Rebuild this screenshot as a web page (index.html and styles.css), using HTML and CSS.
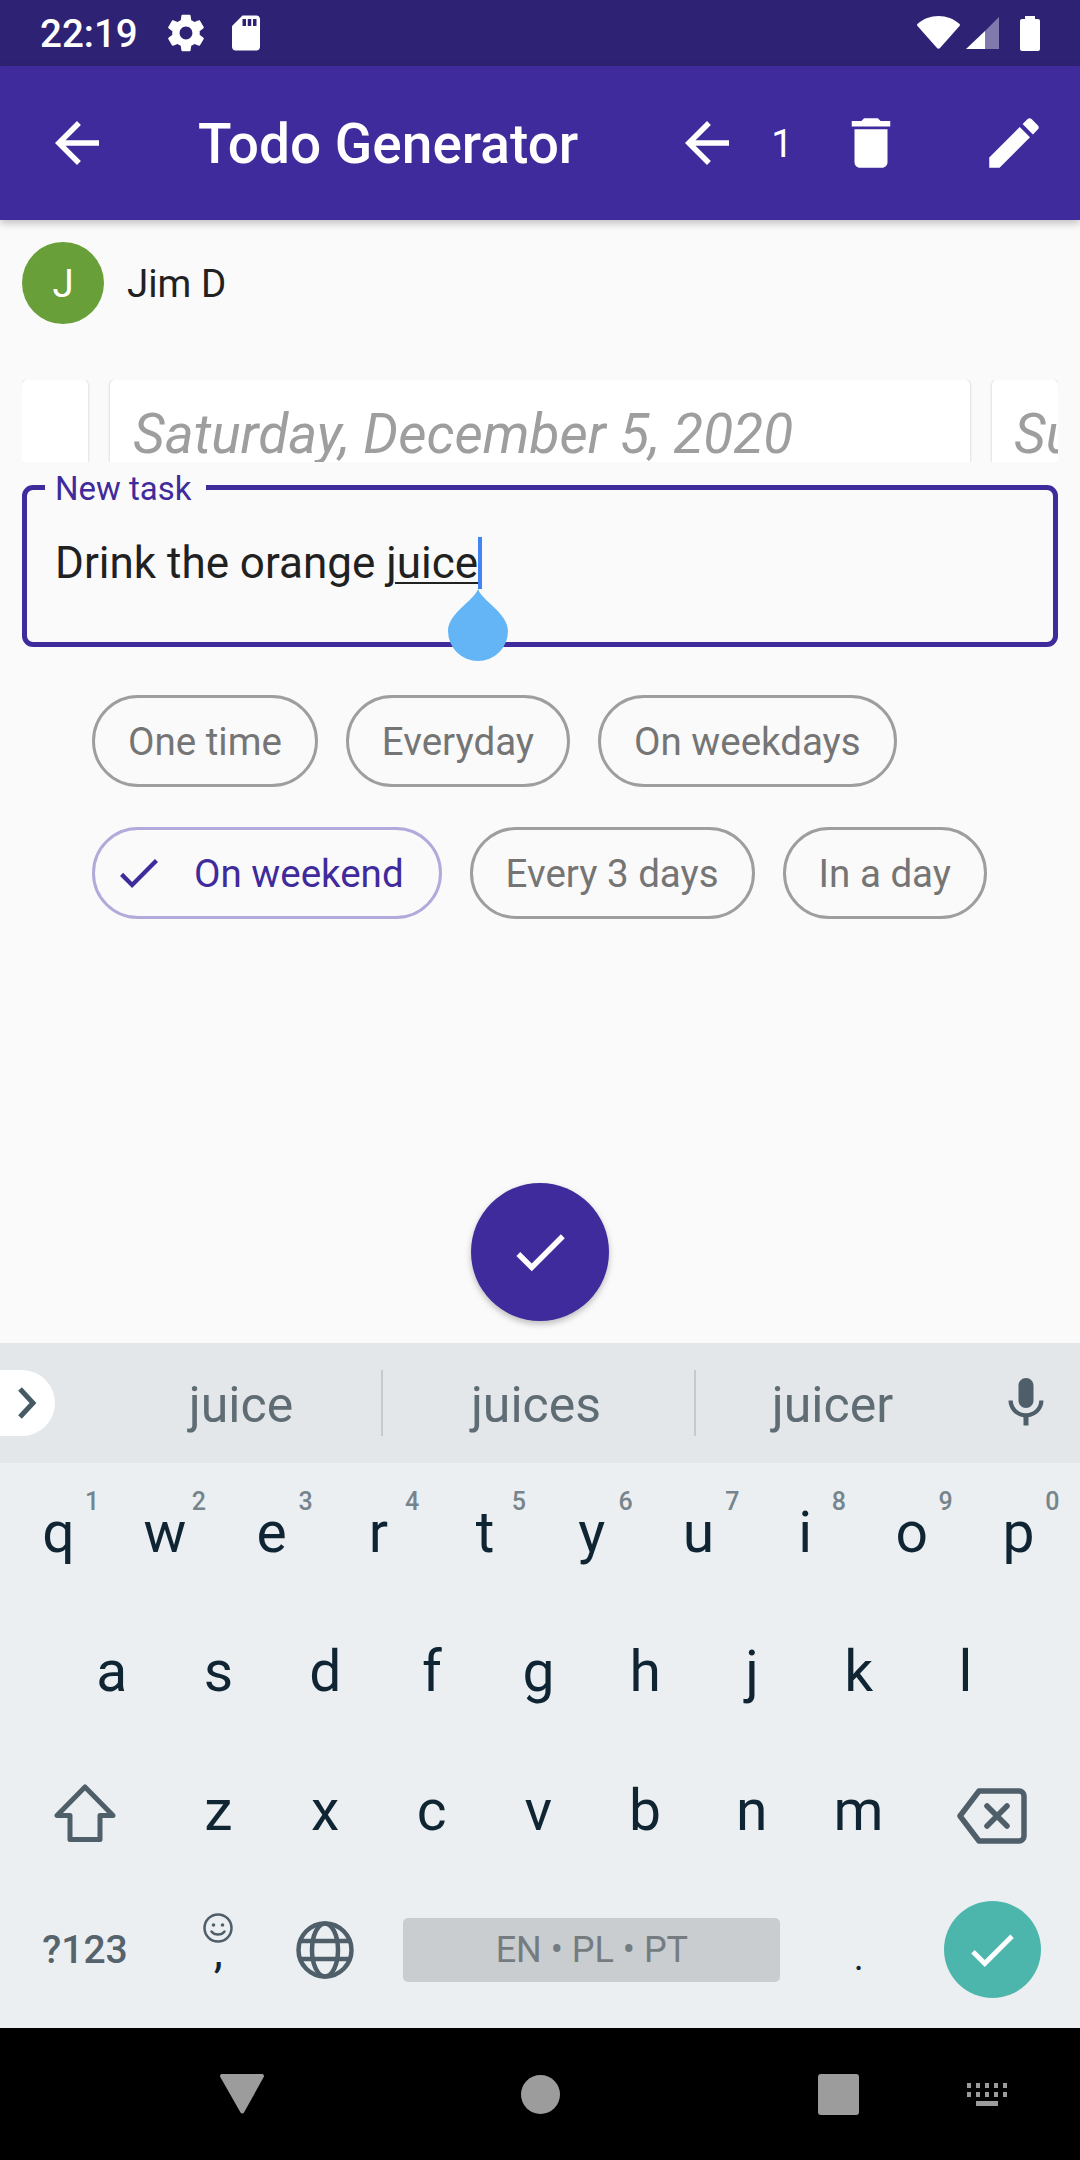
FILE: index.html
```html
<!DOCTYPE html>
<html lang="en">
<head>
    <meta charset="UTF-8">
    <meta name="viewport" content="width=device-width, initial-scale=1.0">
    <title>Todo Generator</title>
    <link rel="stylesheet" href="styles.css">
</head>
<body>

    <div class="status-bar">
        <span class="status-time">22:19</span>
        <svg class="status-gear" viewBox="0 0 24 24"><path d="M19.43 12.98c.04-.32.07-.64.07-.98s-.03-.66-.07-.98l2.11-1.65c.19-.15.24-.42.12-.64l-2-3.46c-.12-.22-.39-.3-.61-.22l-2.49 1c-.52-.4-1.08-.73-1.69-.98l-.38-2.65C14.46 2.18 14.25 2 14 2h-4c-.25 0-.46.18-.49.42l-.38 2.65c-.61.25-1.17.59-1.69.98l-2.49-1c-.23-.09-.49 0-.61.22l-2 3.46c-.13.22-.07.49.12.64l2.11 1.65c-.04.32-.07.65-.07.98s.03.66.07.98l-2.11 1.65c-.19.15-.24.42-.12.64l2 3.46c.12.22.39.3.61.22l2.49-1c.52.4 1.08.73 1.69.98l.38 2.65c.03.24.24.42.49.42h4c.25 0 .46-.18.49-.42l.38-2.65c.61-.25 1.17-.59 1.69-.98l2.49 1c.23.09.49 0 .61-.22l2-3.46c.12-.22.07-.49-.12-.64l-2.11-1.65zM12 15.5c-1.93 0-3.5-1.57-3.5-3.5s1.57-3.5 3.5-3.5 3.5 1.57 3.5 3.5-1.57 3.5-3.5 3.5z"/></svg>
        <svg class="status-sd" viewBox="0 0 24 24"><path d="M18 2h-8L4.02 8 4 20c0 1.1.9 2 2 2h12c1.1 0 2-.9 2-2V4c0-1.1-.9-2-2-2zm-6 6h-2V4h2v4zm3 0h-2V4h2v4zm3 0h-2V4h2v4z"/></svg>
        <span class="status-space"></span>
        <svg class="status-wifi" viewBox="0 0 43 33"><path d="M20 32 .5 10c-.7-.8-.6-1.700.2-2.300C6.500 2.800 13.500 0 21.500 0s15 2.800 20.800 7.700c.8.6.9 1.500.2 2.300L23 32c-.8 1-2.200 1-3 0z"/></svg>
        <svg class="status-signal" viewBox="0 0 33 32"><path class="signal-dim" d="M33 0v32H19V14z"/><path d="M19 14v18H0z"/></svg>
        <svg class="status-battery" viewBox="0 0 20 35"><path d="M5 0h10v3h3a2 2 0 0 1 2 2v28a2 2 0 0 1-2 2H2a2 2 0 0 1-2-2V5a2 2 0 0 1 2-2h3z"/></svg>
    </div>

    <header class="app-bar">
        <div class="bar-leading">
            <svg class="bar-icon" viewBox="0 0 24 24"><path d="M20 11H7.830l5.590-5.590L12 4l-8 8 8 8 1.410-1.410L7.830 13H20v-2z"/></svg>
        </div>
        <h1 class="bar-title">Todo Generator</h1>
        <svg class="bar-icon" viewBox="0 0 24 24"><path d="M20 11H7.830l5.590-5.590L12 4l-8 8 8 8 1.410-1.410L7.830 13H20v-2z"/></svg>
        <span class="bar-count">1</span>
        <svg class="bar-icon bar-trash" viewBox="0 0 24 24"><path d="M6 19c0 1.1.9 2 2 2h8c1.1 0 2-.9 2-2V7H6v12zM19 4h-3.5l-1-1h-5l-1 1H5v2h14V4z"/></svg>
        <svg class="bar-icon bar-edit" viewBox="0 0 24 24"><path d="M3 17.25V21h3.75L17.81 9.94l-3.75-3.75L3 17.25zM20.71 7.04c.39-.39.39-1.02 0-1.41l-2.34-2.34c-.39-.39-1.02-.39-1.41 0l-1.83 1.83 3.75 3.75 1.83-1.83z"/></svg>
    </header>

    <main class="content">
        <div class="user-row">
            <div class="avatar">J</div>
            <span class="user-name">Jim D</span>
        </div>

        <div class="day-strip">
            <div class="day-card day-prev"></div>
            <div class="day-card day-current">Saturday, December 5, 2020</div>
            <div class="day-card day-next">Sunday</div>
        </div>

        <div class="task-field">
            <span class="task-label">New task</span>
            <div class="task-text">Drink the orange <span class="task-word">juice</span><span class="task-cursor"></span></div>
            <svg class="task-handle" viewBox="0 0 60 72"><path d="M30 0C34 12 60 24 60 42a30 30 0 0 1-60 0C0 24 26 12 30 0z"/></svg>
        </div>

        <div class="chips">
            <div class="chip">One time</div>
            <div class="chip">Everyday</div>
            <div class="chip">On weekdays</div>
            <div class="chip chip-selected">
                <svg class="chip-check" viewBox="3.4 5.6 17.6 13.4" preserveAspectRatio="none"><path d="M9 16.17L4.83 12l-1.41 1.41L9 19 21 7l-1.41-1.41z"/></svg>
                On weekend
            </div>
            <div class="chip">Every 3 days</div>
            <div class="chip">In a day</div>
        </div>

        <div class="fab">
            <svg class="fab-check" viewBox="0 0 24 24"><path d="M9 16.17L4.83 12l-1.41 1.41L9 19 21 7l-1.41-1.41z"/></svg>
        </div>
    </main>

    <section class="keyboard">
        <div class="suggestions">
            <div class="suggest-toggle">
                <svg viewBox="0 0 20 34"><path d="M3 3l13 14L3 31" fill="none" stroke-width="5"/></svg>
            </div>
            <span class="suggest-word suggest-first">juice</span>
            <span class="suggest-line"></span>
            <span class="suggest-word suggest-second">juices</span>
            <span class="suggest-line"></span>
            <span class="suggest-word suggest-third">juicer</span>
            <svg class="suggest-mic" viewBox="0 0 24 24"><path d="M12 14c1.66 0 3-1.34 3-3V5c0-1.66-1.34-3-3-3S9 3.34 9 5v6c0 1.66 1.34 3 3 3zm5.3-3c0 3-2.54 5.1-5.3 5.1S6.7 14 6.7 11H5c0 3.41 2.72 6.23 6 6.72V21h2v-3.28c3.28-.48 6-3.3 6-6.72h-1.7z"/></svg>
        </div>

        <div class="key-row">
            <div class="key">q<sup class="key-hint">1</sup></div>
            <div class="key">w<sup class="key-hint">2</sup></div>
            <div class="key">e<sup class="key-hint">3</sup></div>
            <div class="key">r<sup class="key-hint">4</sup></div>
            <div class="key">t<sup class="key-hint">5</sup></div>
            <div class="key">y<sup class="key-hint">6</sup></div>
            <div class="key">u<sup class="key-hint">7</sup></div>
            <div class="key">i<sup class="key-hint">8</sup></div>
            <div class="key">o<sup class="key-hint">9</sup></div>
            <div class="key">p<sup class="key-hint">0</sup></div>
        </div>
        <div class="key-row key-row-inset">
            <div class="key">a</div>
            <div class="key">s</div>
            <div class="key">d</div>
            <div class="key">f</div>
            <div class="key">g</div>
            <div class="key">h</div>
            <div class="key">j</div>
            <div class="key">k</div>
            <div class="key">l</div>
        </div>
        <div class="key-row">
            <div class="key key-wide">
                <svg class="shift-icon" viewBox="0 0 62 60"><path d="M31 3 3 31.500h13v24h30v-24h13z" fill="none" stroke-width="5" stroke-linejoin="round"/></svg>
            </div>
            <div class="key">z</div>
            <div class="key">x</div>
            <div class="key">c</div>
            <div class="key">v</div>
            <div class="key">b</div>
            <div class="key">n</div>
            <div class="key">m</div>
            <div class="key key-wide">
                <svg class="back-icon" viewBox="0 0 70 56"><path d="M22 3h40a5 5 0 0 1 5 5v40a5 5 0 0 1-5 5H22L3 28z" fill="none" stroke-width="5.5" stroke-linejoin="round"/><path d="M30 18l20 20M50 18 30 38" fill="none" stroke-width="5.5" stroke-linecap="round"/></svg>
            </div>
        </div>
        <div class="key-row key-row-last">
            <div class="key key-wide key-symbols">?123</div>
            <div class="key key-comma">
                <svg class="emoji-icon" viewBox="0 0 30 30"><circle cx="15" cy="15" r="13.500" fill="none" stroke-width="2.500"/><circle cx="10.500" cy="12" r="1.800" stroke="none"/><circle cx="19.500" cy="12" r="1.800" stroke="none"/><path d="M8.500 18.500c3 4 10 4 13 0" fill="none" stroke-width="2.500" stroke-linecap="round"/></svg>
                <span class="comma-mark">,</span>
            </div>
            <div class="key">
                <svg class="globe-icon" viewBox="0 0 60 60" fill="none" stroke-width="4.500"><circle cx="30" cy="30" r="26.500"/><ellipse cx="30" cy="30" rx="13" ry="26.500"/><path d="M6 21h48M6 39h48"/></svg>
            </div>
            <div class="key-space"><div class="space-bar">EN • PL • PT</div></div>
            <div class="key key-period">.</div>
            <div class="key key-wide">
                <div class="enter-btn">
                    <svg viewBox="0 0 24 24"><path d="M9 16.17L4.83 12l-1.41 1.41L9 19 21 7l-1.41-1.41z"/></svg>
                </div>
            </div>
        </div>
    </section>

    <nav class="nav-bar">
        <svg class="nav-back" viewBox="0 0 44 40"><path d="M2 0h40a2 2 0 0 1 1.700 3L24 38.500a2 2 0 0 1-3.500 0L.3 3A2 2 0 0 1 2 0z"/></svg>
        <span class="nav-home"></span>
        <span class="nav-recent"></span>
        <svg class="nav-keys" viewBox="0 0 40 23"><path d="M0 0h4v5H0zM9 0h4v5H9zM18 0h4v5h-4zM27 0h4v5h-4zM36 0h4v5h-4zM0 9h4v5H0zM9 9h4v5H9zM18 9h4v5h-4zM27 9h4v5h-4zM36 9h4v5h-4zM9 18h22v5H9z"/></svg>
    </nav>

</body>
</html>
```

FILE: styles.css
```css
* {
    box-sizing: border-box;
}
body {
    font-family: Roboto, "Noto Sans", sans-serif;
    margin: 0;
    width: 1080px;
    height: 2160px;
    overflow: hidden;
    display: flex;
    flex-direction: column;
    background-color: #fafafa;
}

/* status bar */
.status-bar {
    height: 66px;
    flex: none;
    background-color: #2e2275;
    display: flex;
    align-items: center;
    padding: 0 40px 0 40px;
    color: white;
    fill: white;
}
.status-time {
    font-size: 38.5px;
    font-weight: 500;
    width: 124px;
}
.status-gear {
    width: 44px;
    height: 44px;
}
.status-sd {
    width: 42px;
    height: 42px;
    margin-left: 17px;
}
.status-space {
    flex: 1;
}
.status-wifi {
    width: 43px;
    height: 33px;
    margin-bottom: 2px;
}
.status-signal {
    width: 33px;
    height: 32px;
    margin-left: 6px;
}
.signal-dim {
    opacity: 0.4;
}
.status-battery {
    width: 20px;
    height: 35px;
    margin-left: 21px;
}

/* app bar */
.app-bar {
    height: 154px;
    flex: none;
    background-color: #3f2b9b;
    color: white;
    fill: white;
    display: flex;
    align-items: center;
    padding-right: 33px;
    box-shadow: 0 3px 8px rgba(0, 0, 0, 0.25);
    position: relative;
}
.bar-leading {
    width: 154px;
    padding-left: 44px;
    display: flex;
}
.bar-icon {
    width: 66px;
    height: 66px;
    flex: none;
}
.bar-title {
    flex: 1;
    margin: 0 0 0 44px;
    padding-top: 2px;
    font-size: 55px;
    font-weight: 500;
}
.bar-count {
    width: 84px;
    text-align: center;
    font-size: 38.5px;
}
.bar-trash {
    margin-left: 14px;
}
.bar-edit {
    margin-left: 77px;
}

/* main area */
.content {
    flex: 1;
    padding: 22px 22px 0;
    display: flex;
    flex-direction: column;
}
.user-row {
    display: flex;
    align-items: center;
    gap: 23px;
}
.avatar {
    width: 82px;
    height: 82px;
    border-radius: 50%;
    background-color: #689f38;
    color: white;
    font-size: 38.5px;
    display: flex;
    align-items: center;
    justify-content: center;
}
.user-name {
    font-size: 38.5px;
    color: #212121;
}
.day-strip {
    display: flex;
    gap: 22px;
    height: 82px;
    margin-top: 56px;
    overflow: hidden;
}
.day-card {
    height: 100px;
    flex: none;
    background-color: white;
    border-radius: 5px;
    box-shadow: 0 0 3px rgba(0, 0, 0, 0.2);
    font-size: 55px;
    font-style: italic;
    line-height: 108px;
    color: #9e9e9e;
    overflow: hidden;
}
.day-prev {
    width: 66px;
}
.day-current {
    width: 860px;
    padding-left: 23px;
}
.day-next {
    width: 66px;
    padding-left: 22px;
}
.task-field {
    position: relative;
    margin-top: 23px;
    height: 162px;
    border: 5.5px solid #3f2b9b;
    border-radius: 11px;
    padding: 47px 28px 0;
}
.task-label {
    position: absolute;
    left: 18px;
    top: -20px;
    padding: 0 14px 0 10px;
    background-color: #fafafa;
    color: #3f2b9b;
    font-size: 33px;
    line-height: 38px;
}
.task-text {
    font-size: 44px;
    line-height: 52px;
    color: #212121;
    display: flex;
    white-space: pre;
}
.task-word {
    text-decoration: underline;
    text-decoration-thickness: 2px;
    text-underline-offset: 4px;
}
.task-cursor {
    width: 4px;
    height: 52px;
    background-color: #4285f4;
}
.task-handle {
    position: absolute;
    left: 421px;
    top: 99px;
    width: 60px;
    height: 72px;
    fill: #64b5f6;
}
.chips {
    margin-top: 48px;
    padding-left: 70px;
    display: flex;
    flex-wrap: wrap;
    gap: 40px 28px;
}
.chip {
    height: 92px;
    padding: 0 33px;
    border: 3px solid #9e9e9e;
    border-radius: 46px;
    font-size: 38.5px;
    color: #757575;
    display: flex;
    align-items: center;
}
.chip-selected {
    border-color: #b2aada;
    color: #3f2b9b;
    padding: 0 35px 0 25px;
}
.chip-check {
    width: 38px;
    height: 29px;
    fill: #3f2b9b;
    margin-right: 36px;
}
.fab {
    width: 138px;
    height: 138px;
    margin: 264px auto 0;
    border-radius: 50%;
    background-color: #3f2b9b;
    box-shadow: 0 3px 6px rgba(0, 0, 0, 0.25);
    fill: white;
    display: flex;
    align-items: center;
    justify-content: center;
}
.fab-check {
    width: 66px;
    height: 66px;
}

/* keyboard */
.keyboard {
    height: 685px;
    flex: none;
    background-color: #eceff1;
    display: flex;
    flex-direction: column;
}
.suggestions {
    height: 120px;
    background-color: #e3e7ea;
    position: relative;
    display: flex;
    align-items: center;
    color: #5f6c74;
    font-size: 50px;
}
.suggest-toggle {
    width: 55px;
    height: 66px;
    background-color: white;
    border-radius: 0 33px 33px 0;
    display: flex;
    align-items: center;
    justify-content: center;
    stroke: #455a64;
    padding-right: 2px;
}
.suggest-toggle svg {
    width: 20px;
    height: 34px;
}
.suggest-word {
    text-align: center;
    padding-top: 4px;
}
.suggest-first {
    width: 326px;
    padding-left: 46px;
}
.suggest-second {
    width: 311px;
    padding-right: 5px;
}
.suggest-third {
    width: 300px;
    padding-right: 27px;
}
.suggest-line {
    width: 2px;
    height: 66px;
    background-color: #c5cacd;
}
.suggest-mic {
    width: 60px;
    height: 60px;
    fill: #4f5f69;
}
.key-row {
    height: 139px;
    display: flex;
    padding: 0 5px;
    color: #0f2533;
    font-size: 57px;
    stroke: #4f5f69;
    fill: #4f5f69;
}
.key-row-inset {
    padding: 0 58.5px;
}
.key {
    width: 106.7px;
    flex: none;
    position: relative;
    display: flex;
    align-items: center;
    justify-content: center;
}
.key-wide {
    width: 160px;
}
.key-hint {
    position: absolute;
    top: 25px;
    left: 80px;
    font-size: 25px;
    font-weight: 500;
    line-height: 28px;
    color: #76848c;
}
.shift-icon {
    width: 62px;
    height: 60px;
    margin-top: 7px;
}
.back-icon {
    width: 70px;
    height: 56px;
    margin-top: 11px;
}
.key-symbols {
    font-size: 39px;
    color: #55636c;
    font-weight: 500;
}
.key-comma {
    flex-direction: column;
    justify-content: flex-start;
    padding-top: 33px;
    font-size: 46px;
    color: #0f2533;
}
.emoji-icon {
    width: 30px;
    height: 30px;
}
.comma-mark {
    line-height: 16px;
}
.globe-icon {
    width: 60px;
    height: 60px;
}
.key-space {
    width: 427px;
    flex: none;
    padding: 0 25px;
    display: flex;
    align-items: center;
}
.space-bar {
    width: 100%;
    height: 64px;
    background-color: #c9cdd0;
    border-radius: 5px;
    color: #757c80;
    font-size: 36px;
    display: flex;
    align-items: center;
    justify-content: center;
}
.key-period {
    font-size: 38px;
    color: #0f2533;
    padding-top: 14px;
}
.enter-btn {
    width: 97px;
    height: 97px;
    border-radius: 50%;
    background-color: #4db6ac;
    stroke: none;
    fill: white;
    display: flex;
    align-items: center;
    justify-content: center;
}
.enter-btn svg {
    width: 58px;
    height: 58px;
}

/* nav bar */
.nav-bar {
    height: 132px;
    flex: none;
    background-color: black;
    fill: #9c9c9c;
    display: flex;
    align-items: center;
    padding-left: 220px;
}
.nav-back {
    width: 44px;
    height: 40px;
}
.nav-home {
    width: 39px;
    height: 39px;
    margin-left: 257px;
    border-radius: 50%;
    background-color: #9c9c9c;
}
.nav-recent {
    width: 41px;
    height: 41px;
    margin-left: 258px;
    border-radius: 3px;
    background-color: #9c9c9c;
}
.nav-keys {
    width: 40px;
    height: 23px;
    margin-left: 108px;
}
```
